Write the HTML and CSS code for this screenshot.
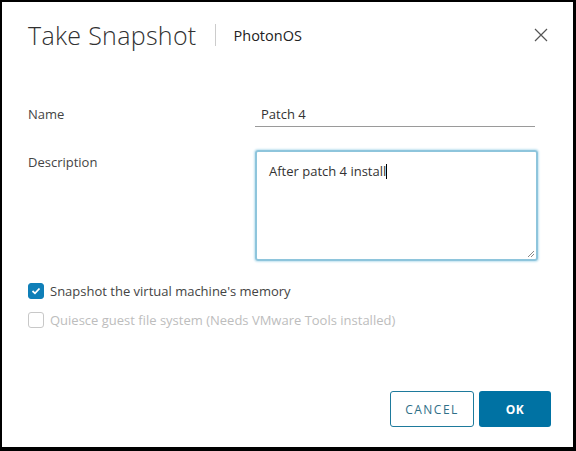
FILE: index.html
```html
<!DOCTYPE html>
<html lang="en">
<head>
  <meta charset="UTF-8">
  <title>Take Snapshot</title>
  <link rel="stylesheet" href="styles.css">
</head>
<body>
  <div class="dialog">
    <header class="dialog-header">
      <h1>Take Snapshot</h1>
      <span class="divider"></span>
      <span class="subtitle">PhotonOS</span>
      <button class="close" aria-label="Close">
        <svg width="14" height="14" viewBox="0 0 14 14">
          <path d="M1 1L13 13M13 1L1 13" stroke="#555" stroke-width="1.2" fill="none"/>
        </svg>
      </button>
    </header>

    <form class="form">
      <div class="row row-name">
        <label for="name">Name</label>
        <div class="input-line">Patch 4</div>
      </div>

      <div class="row row-desc">
        <label for="desc">Description</label>
        <div class="textarea">After patch 4 install<span class="caret"></span>
          <svg class="grip" width="8" height="8" viewBox="0 0 8 8">
            <path d="M7 1L1 7M7 4L4 7" stroke="#888" stroke-width="1" fill="none"/>
          </svg>
        </div>
      </div>

      <div class="check checked">
        <span class="box">
          <svg width="10" height="8" viewBox="0 0 10 8">
            <path d="M1.5 4L4 6.3L8.5 1.5" stroke="#fff" stroke-width="1.8" fill="none"/>
          </svg>
        </span>
        <span>Snapshot the virtual machine's memory</span>
      </div>
      <div class="check disabled">
        <span class="box"></span>
        <span>Quiesce guest file system (Needs VMware Tools installed)</span>
      </div>
    </form>

    <footer class="dialog-footer">
      <button class="btn btn-outline">CANCEL</button>
      <button class="btn btn-primary">OK</button>
    </footer>
  </div>
</body>
</html>
```

FILE: styles.css
```css
* {
  box-sizing: border-box;
}

body {
  margin: 0;
  font-family: "Open Sans", "Noto Sans", sans-serif;
  color: #333;
}

.dialog {
  width: 576px;
  height: 451px;
  border: solid #000;
  border-width: 2px 3px 4px 2px;
  background: #fff;
  display: flex;
  flex-direction: column;
  padding: 19px 22px 20px 26px;
}

.dialog-header {
  display: flex;
  align-items: center;
  height: 28px;
}

.dialog-header h1 {
  margin: 0;
  font-size: 25px;
  line-height: 28px;
  font-weight: 300;
  letter-spacing: 0.3px;
  color: #313131;
}

.divider {
  width: 1px;
  height: 22px;
  background: #ccc;
  margin: 0 18px 0 18px;
}

.subtitle {
  font-size: 14.5px;
  color: #222;
}

.close {
  margin-left: auto;
  margin-right: 3px;
  border: none;
  background: none;
  padding: 0;
  display: flex;
}

.form {
  margin-top: 53px;
  font-size: 13px;
  line-height: 18px;
}

.row {
  display: flex;
}

.row label {
  width: 227px;
  color: #444;
}

.row-name {
  align-items: flex-start;
  height: 25px;
}

.row-name label {
  padding-top: 3px;
}

.input-line {
  width: 280px;
  height: 25px;
  padding: 3px 0 0 6px;
  border-bottom: 1px solid #9a9a9a;
  color: #333;
}

.row-desc {
  margin-top: 23px;
}

.row-desc label {
  padding-top: 3px;
}

.textarea {
  position: relative;
  width: 283px;
  height: 111px;
  border: 2px solid #8ec5dc;
  border-radius: 3px;
  box-shadow: 0 0 2px 1px #c3e3f0;
  padding: 10px 12px;
  color: #333;
}

.caret {
  display: inline-block;
  width: 1px;
  height: 15px;
  background: #000;
  vertical-align: -3px;
}

.grip {
  position: absolute;
  right: 1px;
  bottom: 1px;
}

.check {
  display: flex;
  align-items: center;
  gap: 6px;
  height: 16px;
  margin-top: 22px;
}

.check + .check {
  margin-top: 13px;
}

.box {
  width: 16px;
  height: 16px;
  border-radius: 3px;
  border: 1px solid #c8c8c8;
  display: flex;
  align-items: center;
  justify-content: center;
}

.checked .box {
  background: #0f7fb8;
  border-color: #0f7fb8;
}

.checked span + span {
  color: #444;
}

.disabled span + span {
  color: #bdbdbd;
}

.dialog-footer {
  margin-top: auto;
  display: flex;
  justify-content: flex-end;
  gap: 5px;
}

.btn {
  height: 36px;
  border-radius: 3px;
  font-family: inherit;
  font-size: 12px;
  letter-spacing: 1.5px;
  padding: 0;
}

.btn-outline {
  width: 84px;
  border: 1px solid #1e7a9c;
  background: #fff;
  color: #2f6f88;
}

.btn-primary {
  width: 72px;
  border: none;
  background: #0072a3;
  color: #fff;
  font-weight: 700;
  letter-spacing: 0.5px;
}
```
